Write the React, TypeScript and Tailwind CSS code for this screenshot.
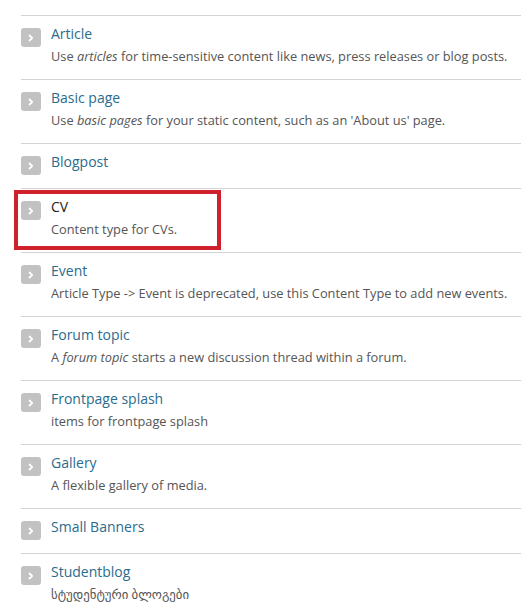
const types = [
  { name: 'Article', desc: <>Use <em>articles</em> for time-sensitive content like news, press releases or blog posts.</> },
  { name: 'Basic page', desc: <>Use <em>basic pages</em> for your static content, such as an 'About us' page.</> },
  { name: 'Blogpost' },
  { name: 'CV', desc: <>Content type for CVs.</>, highlight: true },
  { name: 'Event', desc: <>Article Type -&gt; Event is deprecated, use this Content Type to add new events.</> },
  { name: 'Forum topic', desc: <>A <em>forum topic</em> starts a new discussion thread within a forum.</> },
  { name: 'Frontpage splash', desc: <>items for frontpage splash</> },
  { name: 'Gallery', desc: <>A flexible gallery of media.</> },
  { name: 'Small Banners' },
  { name: 'Studentblog', desc: <>სტუდენტური ბლოგები</> },
];

function Chevron() {
  return (
    <span className="mt-[4px] flex h-[19px] w-[20px] shrink-0 items-center justify-center self-start rounded-[3px] bg-[#c2c2c2]">
      <svg width="8" height="8" viewBox="0 0 8 8" fill="none">
        <path d="M2.5 1.5 L5.2 4 L2.5 6.5" stroke="white" strokeWidth="1.8" strokeLinecap="round" strokeLinejoin="round" />
      </svg>
    </span>
  );
}

export default function App() {
  return (
    <div className="h-[605px] overflow-hidden bg-white pt-[15px] pl-[21px]" style={{ fontFamily: '"Open Sans", "DejaVu Sans", sans-serif' }}>
      <ul>
        {types.map((t) => (
          <li key={t.name} className={`relative flex gap-[10px] border-t border-[#d3d3d3] pt-[8px] ${t.desc ? 'h-[64px]' : 'h-[45px]'}`}>
            {t.highlight && (
              <div className="pointer-events-none absolute left-[-7px] top-[1px] h-[60px] w-[207px] border-[4px] border-[#d0202e]" />
            )}
            <Chevron />
            <div className="flex flex-col">
              <span className={`text-[14px] leading-[20px] ${t.highlight ? 'text-[#222]' : 'text-[#2a6c8d]'}`}>{t.name}</span>
              {t.desc && <span className="mt-[3px] text-[12.8px] leading-[18px] text-[#555]">{t.desc}</span>}
            </div>
          </li>
        ))}
      </ul>
    </div>
  );
}
